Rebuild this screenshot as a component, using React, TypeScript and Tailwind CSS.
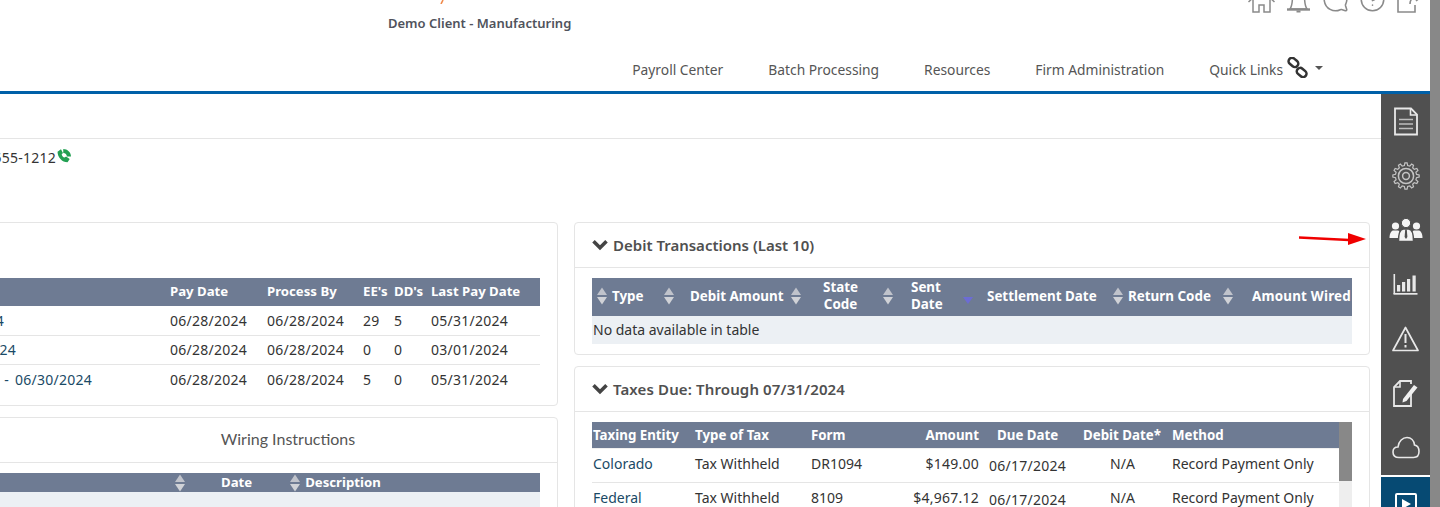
import { CircleHelp, MessageCircle } from 'lucide-react';

const Sort = () => (
  <svg width="10" height="18" viewBox="0 0 10 18" className="shrink-0">
    <path d="M5 0.5 L10 8 H0 Z" fill="#c0c3cb" />
    <path d="M0 10 H10 L5 17.5 Z" fill="#d0d2d7" />
  </svg>
);

const SortDown = () => (
  <svg width="10" height="18" viewBox="0 0 10 18" className="shrink-0">
    <path d="M0 10 H10 L5 17 Z" fill="#6c6cd4" />
  </svg>
);

const Chevron = () => (
  <svg width="16" height="12" viewBox="0 0 16 12" className="shrink-0">
    <path d="M1.5 2.2 L8 8.7 L14.5 2.2" fill="none" stroke="#444" strokeWidth="3.6" />
  </svg>
);

const CardTitle = ({ children }: { children: React.ReactNode }) => (
  <div className="flex h-[45px] items-center gap-[5px] border-b border-[#e5e5e5] pl-[17px] text-[15px] font-semibold text-[#505050]">
    <Chevron />
    {children}
  </div>
);

const payrolls = [
  { period: '06/16/2024 - 06/30/2024', pad: 'pr-[164px]', ee: '29', dd: '5', last: '05/31/2024' },
  { period: '06/01/2024 - 06/30/2024', pad: 'pr-[152px]', ee: '0', dd: '0', last: '03/01/2024' },
  { period: '06/01/2024 - 06/30/2024', pad: 'pr-[76px]', ee: '5', dd: '0', last: '05/31/2024' },
];

const debitCols = [
  { label: 'Type', cls: 'w-[72px] gap-[5px] pl-[5px]' },
  { label: 'Debit Amount', cls: 'w-[127px] gap-[16px] whitespace-nowrap' },
  { label: 'State Code', cls: 'w-[92px] gap-[22px] text-center' },
  { label: 'Sent Date', cls: 'w-[80px] gap-[18px]' },
];

const taxes = [
  { entity: 'Colorado', form: 'DR1094', amount: '$149.00' },
  { entity: 'Federal', form: '8109', amount: '$4,967.12' },
];

const rail = ['file', 'gear', 'users', 'chart', 'warn', 'note', 'cloud'];

// outline of a 12 tooth gear
const gearPath = (() => {
  const pts: string[] = [];
  const teeth = 12;
  for (let i = 0; i < teeth; i++) {
    const a = (i / teeth) * Math.PI * 2;
    const s = (Math.PI * 2) / teeth;
    [
      [a - s * 0.3, 10.6],
      [a - s * 0.16, 13.2],
      [a + s * 0.16, 13.2],
      [a + s * 0.3, 10.6],
    ].forEach(([t, r]) => {
      pts.push(`${(14 + r * Math.cos(t)).toFixed(2)} ${(14 + r * Math.sin(t)).toFixed(2)}`);
    });
  }
  return `M${pts.join(' L')} Z`;
})();

const RailIcon = ({ name }: { name: string }) => {
  const common = { fill: 'none', stroke: '#e8e8e8', strokeWidth: 1.6 };
  if (name === 'file')
    return (
      <svg width="26" height="29" viewBox="0 0 26 29" {...common}>
        <path d="M2 1.5 H18 L24 7.5 V27.5 H2 Z" strokeWidth="1.8" />
        <path d="M17.5 2 V8 H24" />
        <path d="M6 12.5 H20 M6 17 H20 M6 21.5 H20" stroke="#bdbdbd" />
      </svg>
    );
  if (name === 'gear')
    return (
      <svg width="28" height="28" viewBox="0 0 28 28" stroke="#c4c4c4" fill="none" strokeWidth="1.2">
        <path d={gearPath} />
        <circle cx="14" cy="14" r="7.6" strokeWidth="1.5" />
        <circle cx="14" cy="14" r="3.4" strokeWidth="1.5" />
      </svg>
    );
  if (name === 'users')
    return (
      <svg width="34" height="24" viewBox="0 0 34 24" fill="#f4f4f4">
        <circle cx="6.5" cy="8" r="3.6" />
        <path d="M0.5 20 C0.5 15 2.5 12.5 4.5 12.5 L8.5 12.5 C10.5 12.5 12 15 12 20 Z" />
        <circle cx="27.5" cy="8" r="3.6" />
        <path d="M33.5 20 C33.5 15 31.5 12.5 29.5 12.5 L25.5 12.5 C23.5 12.5 22 15 22 20 Z" />
        <circle cx="17" cy="5" r="4.6" stroke="#505050" strokeWidth="1" />
        <path d="M9.5 23.5 C9.5 15 11.5 11 14.5 11 L19.5 11 C22.5 11 24.5 15 24.5 23.5 Z" stroke="#505050" strokeWidth="1.4" />
        <path d="M16.2 11.5 H17.8 L18.4 19 L17 21 L15.6 19 Z" fill="#505050" />
      </svg>
    );
  if (name === 'chart')
    return (
      <svg width="25" height="21" viewBox="0 0 25 21" fill="#e8e8e8">
        <rect x="0.5" y="0" width="1.6" height="20" />
        <rect x="0.5" y="19" width="24" height="1.7" />
        <rect x="4" y="11" width="3.2" height="6.5" />
        <rect x="9" y="8" width="3.2" height="9.5" />
        <rect x="14" y="5" width="3.2" height="12.5" />
        <rect x="19.5" y="1.5" width="3.2" height="16" />
      </svg>
    );
  if (name === 'warn')
    return (
      <svg width="27" height="26" viewBox="0 0 27 26" {...common}>
        <path d="M13.5 1.5 L26 24.5 H1 Z" strokeLinejoin="round" strokeWidth="1.7" />
        <path d="M13.5 8 V17" strokeWidth="2" />
        <path d="M13.5 19 V21.5" strokeWidth="2" />
      </svg>
    );
  if (name === 'note')
    return (
      <svg width="26" height="27" viewBox="0 0 26 27" {...common}>
        <path d="M18 13 V26 H1 V7 L7 1 H18 V4" strokeWidth="1.8" />
        <path d="M7 1.5 V7 H1.5" />
        <path d="M10 19 L21 5 L24.5 7.5 L13.5 21 L9.5 22.5 Z" fill="#f0f0f0" stroke="none" />
      </svg>
    );
  return (
    <svg width="28" height="23" viewBox="0 0 28 23" {...common}>
      <path d="M7 21.5 C3 21.5 1 19 1 16 C1 13 3 11 6 11 C6.5 5 11 1.5 15 1.5 C19 1.5 22 4.5 22.5 9 C25 9.5 27 12 27 15.5 C27 19 25 21.5 21.5 21.5 Z" />
    </svg>
  );
};

export default function App() {
  return (
    <div className="flex h-[507px] w-[1440px] overflow-hidden bg-white font-['Noto_Sans',sans-serif] text-[14px] text-[#333]">
      <div className="relative w-[1430px] shrink-0">
        <header className="relative h-[94px] border-b-[3px] border-[#0060a8]">
          <div className="flex h-[13px] items-end justify-end gap-[10px] overflow-hidden pr-[7px] text-[#8a8a8a]">
            <svg width="27" height="26" viewBox="0 0 27 26" fill="none" stroke="#8a8a8a" strokeWidth="1.5" className="shrink-0">
              <path d="M0.5 15 L13.5 3 L26.5 15 M5 12.5 V25 H11 V18 H16 V25 H22 V12.5" />
            </svg>
            <svg width="27" height="26" viewBox="0 0 27 26" fill="none" stroke="#8a8a8a" strokeWidth="1.5" className="shrink-0">
              <path d="M5 22 C7 19 7.5 15 7.5 9 C7.5 5 10 2 13.5 2 C17 2 19.5 5 19.5 9 C19.5 15 20 19 22 22 Z" />
              <path d="M2 22.5 H25" strokeWidth="2.4" />
              <path d="M11.5 24.5 H15.5" strokeWidth="2" />
            </svg>
            <MessageCircle size={27} strokeWidth={1.4} className="shrink-0 -scale-x-100" />
            <CircleHelp size={27} strokeWidth={1.4} className="shrink-0" />
            <svg width="27" height="26" viewBox="0 0 27 26" fill="none" stroke="#8a8a8a" strokeWidth="1.6" className="shrink-0">
              <path d="M16 8 H2 V25 H19 V18" />
              <path d="M14 17 C14 12 18 9 24 9 M20 4 L26 9 L20 14" />
            </svg>
          </div>
          <div className="absolute left-[388px] top-[14px] text-[13px] font-semibold text-[#50535c]">Demo Client - Manufacturing</div>
          <svg width="6" height="4" className="absolute left-[440px] top-0">
            <path d="M1 4 L3 0" stroke="#f08a4b" strokeWidth="1.6" />
          </svg>
          <nav className="absolute right-[107px] top-[60px] flex items-center gap-[45px] text-[13.8px] text-[#555]">
            <span>Payroll Center</span>
            <span>Batch Processing</span>
            <span>Resources</span>
            <span>Firm Administration</span>
            <span className="flex items-center">
              Quick Links
              <svg width="21" height="21" viewBox="0 0 20 20" fill="none" stroke="#333" strokeWidth="2.4" className="ml-[4px] -mt-[6px]">
                <rect x="1.2" y="1.8" width="10" height="6.5" rx="3.2" transform="rotate(40 6 5)" />
                <rect x="8.8" y="11.6" width="10" height="6.5" rx="3.2" transform="rotate(40 14 15)" />
              </svg>
              <span className="ml-[7px] -mt-[4px] h-0 w-0 border-x-[4px] border-t-[4px] border-x-transparent border-t-[#555]" />
            </span>
          </nav>
        </header>

        <div className="h-[45px] border-b border-[#e5e5e5]" />

        <div className="flex h-[83px] items-start">
          <div className="mt-[8px] flex w-[56px] justify-end">
            <span className="whitespace-nowrap tracking-[0.25px]">(303) 555-1212</span>
          </div>
          <svg width="14" height="14" viewBox="0 0 13 13" fill="#22a052" className="ml-[1px] mt-[10px]">
            <path d="M0.5 2.5 L3.7 0.2 L5.5 3.8 L4.3 5 C4.7 6.3 5.7 7.4 7 8 L8.4 6.9 L11.8 9.2 L9.8 12.3 C4.7 12.3 0.5 7.5 0.5 2.5 Z" />
            <path d="M5.8 0 C9.6 0 13 3 13 7 L9.2 7 C9.2 5 7.8 3.6 5.8 3.6 Z" />
          </svg>
        </div>

        <div className="-ml-[200px] flex gap-[16px]">
          <div className="flex w-[758px] shrink-0 flex-col gap-[11px]">
            <section className="h-[184px] rounded border border-[#e5e5e5] px-[17px] pt-[55px]">
              <div className="grid h-[28px] grid-cols-[350px_97px_96px_31px_37px_112px] items-center bg-[#6e7b93] text-[13.2px] font-bold text-white">
                <span />
                <span className="pl-[2px]">Pay Date</span>
                <span className="pl-[2px]">Process By</span>
                <span className="pl-[2px]">EE's</span>
                <span className="pl-[2px]">DD's</span>
                <span className="pl-[2px]">Last Pay Date</span>
              </div>
              {payrolls.map((row) => (
                <div key={row.pad} className="grid h-[29.6px] grid-cols-[350px_97px_96px_31px_37px_112px] items-center border-b border-[#e5e5e5] tracking-[0.25px] last:border-b-0">
                  <span className={`whitespace-nowrap text-right text-[#1a4a66] [word-spacing:2px] ${row.pad}`}>{row.period}</span>
                  <span className="pl-[2px]">06/28/2024</span>
                  <span className="pl-[2px]">06/28/2024</span>
                  <span className="pl-[2px]">{row.ee}</span>
                  <span className="pl-[2px]">{row.dd}</span>
                  <span className="pl-[2px]">{row.last}</span>
                </div>
              ))}
            </section>
            <section className="h-[200px] rounded border border-[#e5e5e5] px-[17px]">
              <div className="flex h-[44px] items-center justify-center pb-[2px] pl-[218px] font-['Lato',sans-serif] text-[16px] text-[#555]">Wiring Instructions</div>
              <div className="-mx-[17px] border-t border-[#e5e5e5] px-[17px] pt-[10px]">
                <div className="flex h-[19px] items-center bg-[#6e7b93] text-[13.2px] font-bold text-white">
                  <div className="ml-[357px]"><Sort /></div>
                  <span className="ml-[36px]">Date</span>
                  <div className="ml-[38px]"><Sort /></div>
                  <span className="ml-[5px]">Description</span>
                </div>
                <div className="h-[30px] bg-[#ecf0f4]" />
              </div>
            </section>
          </div>

          <div className="flex w-[796px] shrink-0 flex-col gap-[11px]">
            <section className="h-[133px] rounded border border-[#e5e5e5]">
              <CardTitle>Debit Transactions (Last 10)</CardTitle>
              <div className="px-[17px] pt-[10px]">
                <div className="flex h-[38px] items-center bg-[#6e7b93] pb-[2px] text-[13.4px] font-bold leading-[17px] text-white">
                  {debitCols.map((col) => (
                    <div key={col.label} className={`flex shrink-0 items-center ${col.cls}`}>
                      <Sort />
                      <span className="w-min">{col.label}</span>
                    </div>
                  ))}
                  <div className="flex w-[150px] shrink-0 items-center gap-[14px]">
                    <SortDown />
                    <span className="whitespace-nowrap">Settlement Date</span>
                  </div>
                  <div className="flex w-[110px] shrink-0 items-center gap-[5px]">
                    <Sort />
                    <span className="whitespace-nowrap">Return Code</span>
                  </div>
                  <div className="flex shrink-0 items-center gap-[19px]">
                    <Sort />
                    <span className="whitespace-nowrap tracking-[0.2px]">Amount Wired</span>
                  </div>
                </div>
                <div className="flex h-[28px] items-center bg-[#ecf0f4] pb-[2px] pl-[1px]">No data available in table</div>
              </div>
            </section>

            <section className="h-[200px] rounded border border-[#e5e5e5]">
              <CardTitle>
                <span className="tracking-[0.13px]">Taxes Due: Through 07/31/2024</span>
              </CardTitle>
              <div className="flex px-[17px] pt-[10px]">
                <div className="w-[747px]">
                  <div className="grid h-[27px] grid-cols-[102px_116px_90px_80px_100px_90px_1fr] items-center border-b border-[#f0f0f0] bg-[#6e7b93] pt-[1px] text-[13.3px] font-bold text-white">
                    <span className="pl-[1px]">Taxing Entity</span>
                    <span className="pl-[1px]">Type of Tax</span>
                    <span className="pl-[1px]">Form</span>
                    <span className="pr-[1px] text-right">Amount</span>
                    <span className="pl-[17px]">Due Date</span>
                    <span className="whitespace-nowrap pl-[3px]">Debit Date*</span>
                    <span className="pl-[2px]">Method</span>
                  </div>
                  {taxes.map((row) => (
                    <div key={row.entity} className="grid h-[34px] grid-cols-[102px_116px_90px_80px_100px_90px_1fr] items-center border-b border-[#e5e5e5]">
                      <span className="-mt-[4px] pl-[1px] text-[#1a4a66]">{row.entity}</span>
                      <span className="-mt-[4px] pl-[1px]">Tax Withheld</span>
                      <span className="-mt-[4px] pl-[1px]">{row.form}</span>
                      <span className="-mt-[4px] pr-[1px] text-right tracking-[0.25px]">{row.amount}</span>
                      <span className="pl-[9px] tracking-[0.25px]">06/17/2024</span>
                      <span className="-mt-[4px] pr-[5px] text-center">N/A</span>
                      <span className="-mt-[4px] whitespace-nowrap pl-[2px]">Record Payment Only</span>
                    </div>
                  ))}
                </div>
                <div className="h-[120px] w-[13px] shrink-0 bg-[#eeeeee]">
                  <div className="h-[59px] bg-[#888888]" />
                </div>
              </div>
            </section>
          </div>
        </div>

        <aside className="absolute right-0 top-[94px] h-[413px] w-[49px] bg-[#505050]">
          {rail.map((name) => (
            <div key={name} className="flex h-[54.4px] items-center justify-center">
              <RailIcon name={name} />
            </div>
          ))}
          <div className="h-[32px] border-t-[2px] border-white bg-[#064a73] pl-[14px] pt-[16px]">
            <svg width="22" height="22" viewBox="0 0 22 22" fill="none" stroke="#fff" strokeWidth="2">
              <rect x="1" y="1" width="20" height="20" rx="1" />
              <path d="M7 6 L16 11 L7 16 Z" fill="#fff" stroke="none" />
            </svg>
          </div>
        </aside>

        <svg width="72" height="16" viewBox="0 0 72 16" className="absolute left-[1297px] top-[231px]">
          <path d="M2 6.5 L52 9" stroke="#f00000" strokeWidth="2.4" />
          <path d="M51 2 L69 8 L51 14 Z" fill="#f00000" />
        </svg>
      </div>
      <div className="w-[10px] shrink-0 bg-[#888888]" />
    </div>
  );
}
